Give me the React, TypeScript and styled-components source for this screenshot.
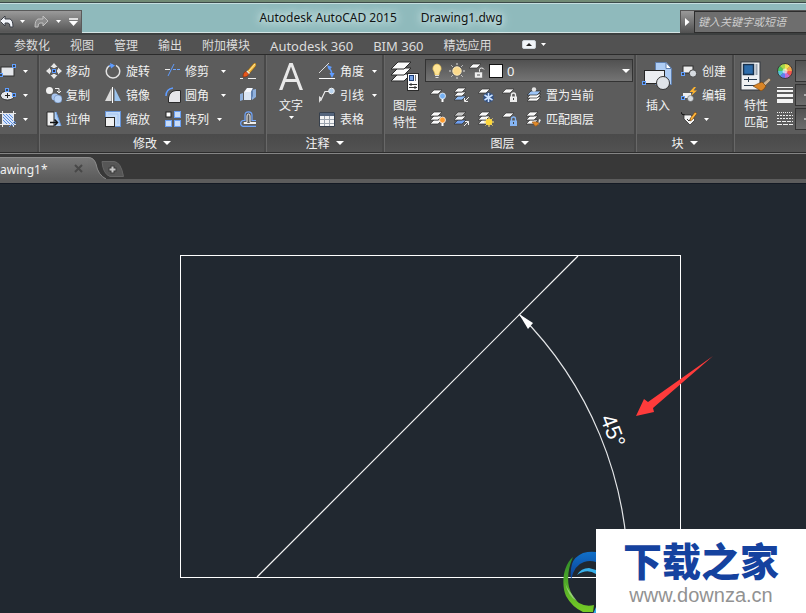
import React from "react";
import styled, { createGlobalStyle, css } from "styled-components";

const GlobalStyle = createGlobalStyle`
  *, *::before, *::after { box-sizing: border-box; }
  html, body { margin: 0; padding: 0; background: #212830; }
  body {
    font-family: "Noto Sans", "Noto Sans CJK SC", sans-serif;
    font-size: 12px;
    line-height: 16px;
    color: #f2f2f2;
  }
  button, input, select { font: inherit; color: inherit; }
`;

const Window = styled.div`
  display: flex;
  flex-direction: column;
  min-height: 100vh;
  overflow: hidden;
`;

const bareButton = css`
  display: flex;
  align-items: center;
  margin: 0;
  padding: 0;
  border: 0;
  background: none;
  white-space: nowrap;
  cursor: pointer;
`;

/* ---------- title bar ---------- */

const TitleBar = styled.header`
  display: flex;
  align-items: stretch;
  height: 35px;
  border-top: 2px solid #708a74;
  border-bottom: 2px solid #3c3f3f;
  background: #8fbabc;
  box-shadow: inset 0 1px 0 #3c4a49, inset 0 2px 0 #c4dedf, inset 0 -1px 0 #d4e4e4;
`;

const QuickAccess = styled.div`
  display: flex;
  align-items: center;
  width: 82px;
  margin-top: 8px;
  border: 1px solid #5a5a5a;
  border-left: 0;
  background: linear-gradient(#9a9a9a, #555555);
`;

const QuickButton = styled.button<{ $width: number }>`
  ${bareButton}
  justify-content: center;
  width: ${(p) => p.$width}px;
  height: 100%;
`;

const Title = styled.h1`
  display: flex;
  flex: 1;
  justify-content: center;
  gap: 24px;
  margin: 0;
  padding-top: 7px;
  color: #101414;
  font-size: 12px;
  font-weight: 400;
  line-height: 18px;
  white-space: nowrap;
  text-shadow: 0 0 6px #d8ebeb, 0 0 10px #d8ebeb, 0 0 14px #c8e0e0;
`;

const Search = styled.form`
  display: flex;
  width: 126px;
  margin: 8px 0 0;
  border-top: 1px solid #555555;
  border-left: 1px solid #555555;
  background: #6b6b6b;
`;

const SearchToggle = styled.button`
  ${bareButton}
  justify-content: center;
  width: 13px;
  background: linear-gradient(#9a9a9a, #505050);
`;

const SearchInput = styled.input`
  flex: 1;
  min-width: 0;
  padding: 0 0 0 3px;
  border: 1px solid #2d2d2d;
  border-right: 0;
  background: #6e6e6e;
  font-size: 11px;
  font-style: italic;
  &::placeholder { color: #cdcdcd; opacity: 1; }
`;

/* ---------- ribbon tabs ---------- */

const MenuBar = styled.nav`
  display: flex;
  align-items: center;
  gap: 20px;
  height: 20px;
  padding-left: 14px;
  border-bottom: 1px solid #2b2b2b;
  background: #525252;
`;

const MenuItem = styled.button<{ $latin: boolean }>`
  ${bareButton}
  height: 19px;
  padding-top: 2px;
  color: #dcdcdc;
  font-size: ${(p) => (p.$latin ? 13 : 12)}px;
`;

const RibbonToggle = styled.button`
  ${bareButton}
  gap: 5px;
  margin-left: 10px;
`;

/* ---------- ribbon ---------- */

const Ribbon = styled.div`
  display: flex;
  height: 98px;
  border-bottom: 1px solid #2c2c2c;
  background: #5c5c5c;
  overflow: hidden;
`;

const Panel = styled.section<{ $width?: number }>`
  display: flex;
  flex-direction: column;
  flex: ${(p) => (p.$width ? `0 0 ${p.$width}px` : "1 0 72px")};
  min-width: 0;
  border-right: 2px solid #484848;
  border-left: 1px solid #686868;
  overflow: hidden;
  &:first-child { border-left: 0; }
  &:last-child { border-right: 0; }
`;

const PanelBody = styled.div<{ $pad: number }>`
  display: flex;
  flex: 1;
  padding: 4px 0 0 ${(p) => p.$pad}px;
`;

const PanelFooter = styled.button`
  ${bareButton}
  justify-content: center;
  gap: 6px;
  width: 100%;
  height: 18px;
  background: linear-gradient(#4a4a4a, #525252);
`;

const Column = styled.div<{ $width?: number }>`
  display: flex;
  flex-direction: column;
  flex: ${(p) => (p.$width ? `0 0 ${p.$width}px` : "1")};
`;

const Tool = styled.button<{ $gap?: number }>`
  ${bareButton}
  gap: ${(p) => p.$gap ?? 5}px;
  height: 24px;
`;

const Label = styled.span`
  padding-top: 2px;
`;

const CaretSlot = styled.span<{ $space: number }>`
  display: flex;
  margin-left: ${(p) => p.$space}px;
`;

const BigTool = styled.button<{ $width: number }>`
  ${bareButton}
  flex: 0 0 ${(p) => p.$width}px;
  flex-direction: column;
  align-self: flex-start;
  padding-top: 2px;
  line-height: 17px;
`;

const BigLabel = styled.span`
  margin-top: 6px;
  white-space: pre-line;
`;

const BigCaret = styled.span`
  display: flex;
  margin-top: 2px;
`;

const LayerColumn = styled(Column)`
  margin-left: 4px;
`;

const LayerRow = styled.div`
  display: flex;
  align-items: center;
  gap: 8px;
  height: 24px;
  padding-left: 5px;
`;

const BlockColumn = styled(Column)`
  margin-left: 6px;
`;

const PropertyColumn = styled(Column)`
  margin-left: 4px;
`;

const ListGroup = styled(Column)`
  padding-left: 10px;
`;

const LayerCombo = styled.label`
  display: flex;
  align-items: center;
  gap: 4px;
  height: 23px;
  margin: 0 1px 1px 0;
  padding: 0 2px 0 3px;
  border: 1px solid #333333;
  background: linear-gradient(#515151, #747474);
`;

const LayerSelect = styled.select`
  appearance: none;
  flex: 1;
  min-width: 0;
  height: 20px;
  margin: 0;
  padding: 0;
  border: 0;
  background: transparent;
  font-size: 13px;
`;

const Swatch = styled.span`
  width: 14px;
  height: 14px;
  border: 1px solid #111111;
  background: #ffffff;
`;

const ValueBox = styled.button`
  ${bareButton}
  flex: 1;
  align-self: center;
  height: 22px;
  min-width: 12px;
  padding-left: 8px;
  border: 1px solid #333333;
  background: linear-gradient(#515151, #6c6c6c);
`;

const PropertyRow = styled.div`
  display: flex;
  align-items: center;
  gap: 2px;
  height: 24px;
`;

/* ---------- file tabs ---------- */

const FileTabs = styled.div`
  display: flex;
  align-items: flex-end;
  height: 30px;
  border-top: 1px solid #858585;
  border-bottom: 4px solid #5c5c5c;
  background: #383838;
`;

const FileTab = styled.div`
  display: flex;
  align-items: center;
  justify-content: space-between;
  width: 88px;
  height: 22px;
  padding-right: 5px;
  border-top: 1px solid #8c8c8c;
  background: linear-gradient(#777777, #5c5c5c);
`;

const IconButton = styled.button`
  ${bareButton}
`;

const AddTab = styled.button`
  ${bareButton}
  height: 22px;
`;

/* ---------- drawing area ---------- */

const Canvas = styled.main`
  position: relative;
  flex: 1;
  min-height: 430px;
  border-top: 1px solid #141a24;
  background: #212830;
  overflow: hidden;
`;

const Drawing = styled.svg`
  display: block;
`;

const Watermark = styled.aside`
  position: absolute;
  right: 0;
  bottom: 0;
  display: flex;
  align-items: flex-end;
`;

const WatermarkCard = styled.div`
  display: flex;
  flex-direction: column;
  align-items: center;
  width: 210px;
  height: 85px;
  padding-top: 9px;
  background: #ffffff;
`;

const WatermarkName = styled.strong`
  color: #15429f;
  font-family: "Noto Sans CJK SC", sans-serif;
  font-size: 39px;
  font-weight: 900;
  line-height: 42px;
`;

const WatermarkLink = styled.a`
  margin-top: 4px;
  color: #929292;
  font-family: "Liberation Sans", sans-serif;
  font-size: 20px;
  line-height: 22px;
  text-decoration: none;
`;

/* ---------- icons ---------- */

const Caret = ({ w = 5 }: { w?: number }) => (
  <svg width={w} height={Math.ceil(w / 2)} viewBox="0 0 10 6" preserveAspectRatio="none">
    <path d="M0 0H10L5 6Z" fill="#fff" />
  </svg>
);

const Svg = ({ w = 16, h = 16, children }: { w?: number; h?: number; children: React.ReactNode }) => (
  <svg width={w} height={h} viewBox={`0 0 ${w} ${h}`} fill="none" aria-hidden="true">
    {children}
  </svg>
);

const Grip = ({ x, y }: { x: number; y: number }) => (
  <rect x={x + 0.5} y={y + 0.5} width="3" height="3" fill="#384454" stroke="#62a0ff" />
);

const Sheet = ({ x, y, fill = "#fafafa" }: { x: number; y: number; fill?: string }) => (
  <path d={`M${x + 4} ${y}h8l-4 4h-8z`} fill={fill} stroke="#303030" strokeWidth=".7" />
);

const Stack = ({ bottom = "#fafafa", top = "#fafafa" }: { bottom?: string; top?: string }) => (
  <>
    <Sheet x={0} y={9} fill={bottom} />
    <Sheet x={0} y={5} />
    <Sheet x={0} y={1} fill={top} />
  </>
);

const Undo = () => (
  <Svg w={13} h={14}>
    <path d="M-1 6L4 1V4H9Q12 5 12 12H9Q9 8 7 8H4V11Z" fill="#f2f5fa" stroke="#3c4048" />
  </Svg>
);
const Redo = () => (
  <Svg w={15} h={14}>
    <path d="M14 6L9 1V4H4Q1 5 1 12H4Q4 8 6 8H9V11Z" fill="#8c8c8c" stroke="#c0c0c0" />
  </Svg>
);
const RectIcon = () => (
  <Svg>
    <rect x="1" y="4" width="13" height="9" fill="#e4e6ea" stroke="#2e2e2e" />
    <Grip x={12} y={1} />
    <Grip x={-1} y={10} />
  </Svg>
);
const EllipseIcon = () => (
  <Svg>
    <ellipse cx="7.500" cy="8.500" rx="7" ry="4.500" fill="#e4e6ea" stroke="#2e2e2e" />
    <path d="M5 8.500h5M7.500 6v5" stroke="#222" />
    <Grip x={12} y={6} />
    <Grip x={5} y={1} />
  </Svg>
);
const HatchIcon = () => (
  <Svg>
    <path d="M0 2.500h16M0 13.500h16M2.500 0v16M13.500 0v16" stroke="#e8e8e8" />
    <path d="M3 3h10v10H3z" fill="#d8e5fa" />
    <path d="M3 6l7 7M3 3l10 10M6 3l7 7M3 9l4 4M9 3l4 4M9 16l6-6M12 15l4-4" stroke="#5b8ee0" />
  </Svg>
);
const MoveIcon = () => (
  <Svg>
    <path d="M8 0l3.500 4h-2v2h-3V4h-2zM8 16l3.500-4h-2v-2h-3v2h-2zM0 8l4-3.500v2h2v3H4v2zM16 8l-4-3.500v2h-2v3h2v2z" fill="#e6e6e6" />
    <rect x="5" y="5" width="6" height="6" fill="#5c5c5c" />
    <rect x="6.500" y="6.500" width="3" height="3" fill="#334" stroke="#5b9bff" />
  </Svg>
);
const RotateIcon = () => (
  <Svg>
    <path d="M5 2.300A6.700 6.700 0 1 0 11 2.300" stroke="#e2e2e2" strokeWidth="1.500" />
    <path d="M5 0l5 2.500-4 3z" fill="#5f9cff" />
    <path d="M4 3l4-1" stroke="#5f9cff" strokeWidth="1.500" />
  </Svg>
);
const CopyIcon = () => (
  <Svg>
    <circle cx="3.500" cy="3.500" r="3.500" fill="#f2f2f2" />
    <circle cx="9" cy="10" r="3.500" fill="#a8c4ee" />
    <circle cx="12" cy="12" r="4" fill="#b8d2f5" stroke="#5c7fb0" strokeWidth=".5" />
    <path d="M9 1.500h4v4M11 4l2 2 2-2" stroke="#eee" />
  </Svg>
);
const MirrorIcon = () => (
  <Svg>
    <path d="M6.500 1v13H0z" fill="#dadada" />
    <path d="M9.500 1v13H16z" fill="#9cc4ee" />
    <path d="M7.500 0v16" stroke="#fff" />
  </Svg>
);
const StretchIcon = () => (
  <Svg>
    <path d="M7 1h3l5 14H7z" fill="#a9cbf4" />
    <path d="M1 1h7v14H1z" fill="#f0f0f0" stroke="#2a2a2a" />
    <path d="M10 1l5 14" stroke="#6ba0ea" />
    <path d="M4 11.500h7M8.500 8.500l3 3-3 3" stroke="#111" strokeWidth="1.500" />
  </Svg>
);
const ScaleIcon = () => (
  <Svg>
    <rect x=".5" y=".5" width="15" height="15" fill="#c2daf8" stroke="#6694d8" />
    <path d="M3 3h10v10" stroke="#a4c4f0" />
    <rect x=".5" y="6.500" width="9" height="9" fill="#f0f0f0" stroke="#2a2a2a" />
  </Svg>
);
const TrimIcon = () => (
  <Svg>
    <path d="M0 6.500h5" stroke="#eee" />
    <path d="M3 13L9 1" stroke="#5f9cff" />
    <path d="M8 6.500h8" stroke="#6fa6ff" strokeDasharray="3 1" />
  </Svg>
);
const FilletIcon = () => (
  <Svg>
    <path d="M3.500 15.500V11Q4.500 4 11 3.500H15.500V15.500z" fill="#e6e6ea" stroke="#2a2a2a" />
    <path d="M1 9Q1 2 8 1" stroke="#5f9cff" strokeWidth="1.500" />
  </Svg>
);
const ArrayIcon = () => (
  <Svg>
    <rect x="1" y="1" width="5" height="5" fill="#fff" stroke="#222" />
    {[[9, 0], [0, 9], [9, 9]].map(([x, y]) => (
      <rect key={`${x}-${y}`} x={x + 0.5} y={y + 0.5} width="6" height="6" fill="#c8dcf8" stroke="#6aa0f4" />
    ))}
  </Svg>
);
const BrushIcon = () => (
  <Svg>
    <path d="M14 0L7 8l2.500 2.500L16 3V0z" fill="#f2b83e" stroke="#6b4a18" strokeWidth=".6" />
    <path d="M15 1l-6 7" stroke="#ffe9a0" />
    <path d="M7.500 7.500l2.500 2.500-2 2-2.500-2.500z" fill="#f4ead8" />
    <path d="M6 8.500Q3 9 3 14Q8.500 14 8.500 11z" fill="#e8571c" stroke="#7a2a08" strokeWidth=".6" />
    <path d="M0 15.500h3M8 15.500h8" stroke="#eee" />
  </Svg>
);
const ExplodeIcon = () => (
  <Svg>
    <path d="M4 5h7v8H4z" fill="#dbe6f4" />
    <path d="M4 5l3-4h6l-2 4z" fill="#f6f9ff" />
    <path d="M12 3l4-1v8l-4 3zM0 7l3-1v7l-3 1z" fill="#8fb0dc" />
    <path d="M11 5l2-4v8l-2 4z" fill="#5f80b0" />
  </Svg>
);
const OffsetIcon = () => (
  <Svg>
    <path d="M16 15.300H3Q.7 15 .7 12.500T3 9.500h2V4Q5 .8 8.500 .8T12 4v5.500h4" stroke="#6fa6ff" strokeWidth="1.200" />
    <path d="M16 12.500H4Q3 12 4 11.500h3V5Q7 3 8.500 3T10 5v6.500h6" stroke="#f0f0f0" />
  </Svg>
);
const AngleIcon = () => (
  <Svg>
    <path d="M0 15.500h16" stroke="#fff" />
    <path d="M0 10L10 0" stroke="#ddd" />
    <path d="M9 4Q13 7 13 13" stroke="#5f9cff" strokeWidth="1.500" />
    <path d="M8 2l5 2-3 3zM10.500 10h5L13 15z" fill="#5f9cff" />
  </Svg>
);
const LeaderIcon = () => (
  <Svg>
    <path d="M1.500 14L6 4.500h4" stroke="#eee" strokeWidth="1.200" />
    <path d="M0 16V9l3 2z" fill="#ddd" />
    <circle cx="12.500" cy="4" r="2.800" fill="#b9d4ef" stroke="#f4f4f4" />
  </Svg>
);
const TableIcon = () => (
  <Svg>
    <path d="M.5 1.500h15v14H.5z" fill="#f4f4f4" stroke="#37404c" />
    <path d="M1 2h14v3H1z" fill="#55657c" />
    <path d="M1 8.500h14M1 12.500h14M5.500 5v10M10.500 5v10" stroke="#9ba3ad" />
  </Svg>
);
const TextIcon = () => (
  <Svg w={28} h={30}>
    <path d="M2 29L12.300 2h3.400L26 29h-3.400l-3-8H8.400l-3 8zM9.400 18h9.200L14 5.500z" fill="#e8e8e8" />
  </Svg>
);
const LayerPropsIcon = () => (
  <Svg w={30} h={30}>
    {[13, 7, 1].map((y) => (
      <path key={y} d={`M8 ${y}h13l-7 7H1z`} fill="#fafafa" stroke="#2a2a2a" />
    ))}
    <rect x="17.500" y="12.500" width="11" height="17" fill="#fafafa" stroke="#2a2a2a" />
    <rect x="19.500" y="14.500" width="4" height="5" fill="#7ba7ea" stroke="#1e3c74" />
    <path d="M25.500 14v6" stroke="#777" />
    <path d="M19 23.500h8M19 26.500h8M21 22v3M25 25v3" stroke="#333" />
  </Svg>
);
const BulbIcon = () => (
  <Svg>
    <path d="M8 1a4.500 4.500 0 0 1 3 7.500Q10 10 10 12H6q0-2-1-3.500A4.500 4.500 0 0 1 8 1z" fill="#ffe596" stroke="#e8c35a" strokeWidth=".7" />
    <path d="M6 12.500h4M6.500 14.500h3" stroke="#ddd" />
  </Svg>
);
const Rays = ({ cx, cy, r, color }: { cx: number; cy: number; r: number; color: string }) => (
  <path
    d={[0, 45, 90, 135, 180, 225, 270, 315]
      .map((a) => {
        const c = Math.cos((a * Math.PI) / 180);
        const s = Math.sin((a * Math.PI) / 180);
        return `M${cx + c * (r - 2)} ${cy + s * (r - 2)}L${cx + c * r} ${cy + s * r}`;
      })
      .join("")}
    stroke={color}
  />
);
const SunIcon = () => (
  <Svg>
    <Rays cx={8} cy={8} r={8} color="#ddd" />
    <circle cx="8" cy="8" r="4.200" fill="#fbd98a" stroke="#ffedbd" />
  </Svg>
);
const UnlockSheetIcon = () => (
  <Svg>
    <Sheet x={0} y={1} />
    <path d="M10.500 9V6.500Q10.500 5 12.500 5T15 6.500" stroke="#eee" />
    <rect x="5.500" y="9" width="8" height="6" fill="#eee" stroke="#555" strokeWidth=".5" />
    <path d="M8 12h3" stroke="#555" />
  </Svg>
);
const BulbBadge = ({ fill }: { fill: string }) => (
  <>
    <circle cx="12.500" cy="9" r="3" fill={fill} stroke="#fff" strokeWidth=".7" />
    <path d="M12.500 12v3" stroke="#fff" strokeWidth="2" />
  </>
);
const LayerOff = () => (
  <Svg><Sheet x={0} y={3} /><BulbBadge fill="#76b2f4" /></Svg>
);
const LayerOn = () => (
  <Svg><Stack /><BulbBadge fill="#ff9d2e" /></Svg>
);
const LayerIsolate = () => (
  <Svg><Stack bottom="#8fbcf6" /><path d="M15 10l-4 4M10.500 11v3.500H14" stroke="#eee" /></Svg>
);
const LayerUnisolate = () => (
  <Svg><Stack top="#c8c8c8" bottom="#6f9ff0" /><path d="M10 15l4.500-4.500M11 10.500h3.500V14" stroke="#eee" /></Svg>
);
const LayerFreeze = () => (
  <Svg>
    <Sheet x={0} y={2} />
    <path d="M10.500 5.500v10M6 8l9 5M6 13l9-5" stroke="#2c4f88" strokeWidth="4" />
    <path d="M10.500 6v9M6.500 8l8 5M6.500 13l8-5" stroke="#cfe4ff" strokeWidth="1.500" />
  </Svg>
);
const LayerThaw = () => (
  <Svg>
    <Stack />
    <Rays cx={11} cy={11} r={5} color="#ffe57a" />
    <circle cx="11" cy="11" r="3.300" fill="#ffd83a" />
  </Svg>
);
const LockBadge = ({ fill }: { fill: string }) => (
  <>
    <path d="M9.500 10V8Q9.500 6 11.500 6T13.500 8v2" stroke={fill} strokeWidth="1.300" />
    <rect x="8" y="9.500" width="7" height="5.500" fill={fill} />
    <path d="M11.500 11v2" stroke="#444" />
  </>
);
const LayerLock = () => (
  <Svg><Sheet x={0} y={2} /><LockBadge fill="#ededed" /></Svg>
);
const LayerUnlock = () => (
  <Svg><Sheet x={0} y={2} /><LockBadge fill="#86b6f4" /></Svg>
);
const MakeCurrentIcon = () => (
  <Svg>
    {[10, 7, 4].map((y) => (
      <path key={y} d={`M5 ${y}h10l-4 4H1z`} fill={y === 4 ? "#9cc4f6" : "#fafafa"} stroke="#2d2d2d" strokeWidth=".7" />
    ))}
    <circle cx="8" cy="2.500" r="2.200" fill="#e6e6e6" />
  </Svg>
);
const MatchLayerIcon = () => (
  <Svg>
    <Stack />
    <path d="M13 8l2 1-3 5z" fill="#eee" />
    <path d="M6 11q4-1 7 1-2 4-4 3z" fill="#e08a2a" stroke="#8a4c10" strokeWidth=".5" />
  </Svg>
);
const InsertIcon = () => (
  <Svg w={32} h={30}>
    <path d="M13.500 1.500H24l5.500 6V23.500H13.500z" fill="#aecdf5" stroke="#5f7fae" />
    <path d="M24 1.500v6h5.500z" fill="#fff" stroke="#5f7fae" />
    <rect x="2.500" y="9.500" width="20" height="13" fill="#eceef2" stroke="#262626" />
    <circle cx="21" cy="22" r="6.500" fill="#dfe3e8" stroke="#333" />
    <Grip x={0} y={20} />
  </Svg>
);
const BlockCreateIcon = () => (
  <Svg>
    <rect x="2" y="3" width="10" height="7" fill="#eee" stroke="#2e2e2e" />
    <circle cx="12" cy="10.500" r="3.700" fill="#d6dbe0" stroke="#444" />
    <Grip x={0} y={9} />
  </Svg>
);
const BlockEditIcon = () => (
  <Svg>
    <rect x="2" y="6" width="8" height="5" fill="#eee" />
    <circle cx="9.500" cy="11.500" r="3" fill="#d6dbe0" stroke="#555" strokeWidth=".5" />
    <path d="M13 0L8.500 5H12L10 9l6-5.500h-3.500L15 0z" fill="#ffb42e" />
    <Grip x={0} y={9} />
  </Svg>
);
const AttributeIcon = () => (
  <Svg>
    <path d="M0 1Q0 4 4 4" stroke="#111" />
    <path d="M3 4h7l4 5-5 5-6-6z" fill="#f4f4f4" stroke="#222" strokeWidth=".7" />
    <path d="M6 8l2 2 3-4" stroke="#333" />
    <path d="M14 1l2 1.500L11 9l-2 1 .5-3z" fill="#ffb63c" stroke="#6a3a0c" strokeWidth=".6" />
  </Svg>
);
const MatchPropsIcon = () => (
  <Svg w={32} h={30}>
    <rect x="1" y="1" width="19" height="28" fill="#eef0f3" stroke="#30363e" />
    <rect x="3.500" y="3.500" width="10" height="10" fill="#2d6cab" stroke="#18304c" strokeWidth="1.500" />
    <path d="M16.500 3v11" stroke="#9aa4b0" strokeWidth="2" />
    <path d="M4 18.500h13M4 24.500h13M8.500 16v5" stroke="#26384c" />
    <path d="M29 17l2 2-6 6-3-2z" fill="#c9b295" stroke="#554430" strokeWidth=".5" />
    <path d="M13 25q6-3 9-4l4 4q-2 4-5 5-3-2-8-5z" fill="#d98425" stroke="#6a3a0c" strokeWidth=".6" />
  </Svg>
);
const wheel = ["#f6a04a", "#f2564e", "#c76ad0", "#5f7df0", "#54c8d8", "#4cc860", "#a8d84a", "#f4e04e"];
const ColorWheel = () => (
  <Svg>
    {wheel.map((c, i) => {
      const a = ((i * 45 - 45) * Math.PI) / 180;
      const b = (i * 45 * Math.PI) / 180;
      return (
        <path
          key={c}
          d={`M8 8L${8 + 7.5 * Math.cos(a)} ${8 + 7.5 * Math.sin(a)}A7.500 7.500 0 0 1 ${8 + 7.5 * Math.cos(b)} ${8 + 7.5 * Math.sin(b)}Z`}
          fill={c}
        />
      );
    })}
    <circle cx="8" cy="8" r="2.500" fill="#fff" opacity=".6" />
    <circle cx="8" cy="8" r="7.500" stroke="#3c3c3c" />
  </Svg>
);
const WeightIcon = () => (
  <Svg>
    <path d="M0 .5h16" stroke="#f4f4f4" />
    <path d="M0 4h16" stroke="#f4f4f4" strokeWidth="2" />
    <path d="M0 8.500h16" stroke="#f4f4f4" strokeWidth="3" />
    <path d="M0 14h16" stroke="#f4f4f4" strokeWidth="4" />
  </Svg>
);
const LineTypeIcon = () => (
  <Svg>
    <path d="M0 1.500h16" stroke="#eee" strokeDasharray="1 1" />
    <path d="M0 4.500h16M0 7.500h16" stroke="#eee" strokeDasharray="2 1" />
    <path d="M0 10.500h16" stroke="#eee" strokeDasharray="4 1" />
    <path d="M0 13.500h16" stroke="#eee" strokeDasharray="5 1" />
  </Svg>
);
const Dash = () => (
  <Svg w={6} h={2}><path d="M0 1h6" stroke="#fff" /></Svg>
);

/* ---------- data ---------- */

const menus = [
  { label: "参数化" },
  { label: "视图" },
  { label: "管理" },
  { label: "输出" },
  { label: "附加模块" },
  { label: "Autodesk 360", latin: true },
  { label: "BIM 360", latin: true },
  { label: "精选应用" },
];

type ToolItem = { icon: React.ReactNode; label: string; caret?: number };

const modifyColumns: { width: number; gap: number; items: ToolItem[] }[] = [
  { width: 59, gap: 4, items: [
    { icon: <MoveIcon />, label: "移动" },
    { icon: <CopyIcon />, label: "复制" },
    { icon: <StretchIcon />, label: "拉伸" },
  ] },
  { width: 60, gap: 5, items: [
    { icon: <RotateIcon />, label: "旋转" },
    { icon: <MirrorIcon />, label: "镜像" },
    { icon: <ScaleIcon />, label: "缩放" },
  ] },
  { width: 75, gap: 4, items: [
    { icon: <TrimIcon />, label: "修剪", caret: 8 },
    { icon: <FilletIcon />, label: "圆角", caret: 8 },
    { icon: <ArrayIcon />, label: "阵列", caret: 4 },
  ] },
];

const annotateTools: ToolItem[] = [
  { icon: <AngleIcon />, label: "角度", caret: 3 },
  { icon: <LeaderIcon />, label: "引线", caret: 3 },
  { icon: <TableIcon />, label: "表格" },
];

const layerRows: { icons: [string, React.ReactNode][]; tool: ToolItem }[] = [
  {
    icons: [["关闭", <LayerOff />], ["隔离", <LayerIsolate />], ["冻结", <LayerFreeze />], ["锁定", <LayerLock />]],
    tool: { icon: <MakeCurrentIcon />, label: "置为当前" },
  },
  {
    icons: [["打开", <LayerOn />], ["取消隔离", <LayerUnisolate />], ["解冻", <LayerThaw />], ["解锁", <LayerUnlock />]],
    tool: { icon: <MatchLayerIcon />, label: "匹配图层" },
  },
];

const ToolButton = ({ item, gap }: { item: ToolItem; gap?: number }) => (
  <Tool type="button" $gap={gap}>
    {item.icon}
    <Label>{item.label}</Label>
    {item.caret !== undefined && <CaretSlot $space={item.caret}><Caret /></CaretSlot>}
  </Tool>
);

const Footer = ({ label }: { label: string }) => (
  <PanelFooter type="button"><Label>{label}</Label><Caret w={8} /></PanelFooter>
);

export default function App() {
  return (
    <>
      <GlobalStyle />
      <Window>
        <TitleBar>
          <QuickAccess>
            <QuickButton $width={14} aria-label="放弃"><Undo /></QuickButton>
            <QuickButton $width={17} aria-label="放弃列表"><Caret /></QuickButton>
            <QuickButton $width={20} aria-label="重做"><Redo /></QuickButton>
            <QuickButton $width={14} aria-label="重做列表"><Caret /></QuickButton>
            <QuickButton $width={16} aria-label="自定义">
              <Svg w={9} h={8}><path d="M0 1h9" stroke="#fff" strokeWidth="1.500" /><path d="M0 3h9l-4.500 5z" fill="#fff" /></Svg>
            </QuickButton>
          </QuickAccess>
          <Title><span>Autodesk AutoCAD 2015</span><span>Drawing1.dwg</span></Title>
          <Search onSubmit={(e) => e.preventDefault()}>
            <SearchToggle type="button" aria-label="展开">
              <Svg w={5} h={8}><path d="M0 0l4.500 4L0 8z" fill="#fff" /></Svg>
            </SearchToggle>
            <SearchInput aria-label="搜索" placeholder="键入关键字或短语" />
          </Search>
        </TitleBar>

        <MenuBar>
          {menus.map((m) => <MenuItem key={m.label} type="button" $latin={!!m.latin}>{m.label}</MenuItem>)}
          <RibbonToggle type="button" aria-label="最小化功能区">
            <Svg w={14} h={9}>
              <rect x=".5" y=".5" width="13" height="8" rx="1.500" fill="#f0f4f8" stroke="#cdd4da" />
              <path d="M4 6l3-3 3 3z" fill="#222" />
            </Svg>
            <Caret />
          </RibbonToggle>
        </MenuBar>

        <Ribbon>
          <Panel $width={39}>
            <PanelBody $pad={0}>
              <Column>
                <Tool type="button" $gap={7} aria-label="矩形"><RectIcon /><Caret /></Tool>
                <Tool type="button" $gap={7} aria-label="椭圆"><EllipseIcon /><Caret /></Tool>
                <Tool type="button" $gap={7} aria-label="图案填充"><HatchIcon /><Caret /></Tool>
              </Column>
            </PanelBody>
            <PanelFooter type="button" aria-label="绘图" />
          </Panel>

          <Panel $width={227}>
            <PanelBody $pad={6}>
              {modifyColumns.map((c) => (
                <Column key={c.width} $width={c.width}>
                  {c.items.map((i) => <ToolButton key={i.label} item={i} gap={c.gap} />)}
                </Column>
              ))}
              <Column>
                <Tool type="button" aria-label="删除"><BrushIcon /></Tool>
                <Tool type="button" aria-label="分解"><ExplodeIcon /></Tool>
                <Tool type="button" aria-label="偏移"><OffsetIcon /></Tool>
              </Column>
            </PanelBody>
            <Footer label="修改" />
          </Panel>

          <Panel $width={118}>
            <PanelBody $pad={6}>
              <BigTool type="button" $width={36}>
                <TextIcon />
                <BigLabel>文字</BigLabel>
                <BigCaret><Caret /></BigCaret>
              </BigTool>
              <ListGroup>
                {annotateTools.map((i) => <ToolButton key={i.label} item={i} />)}
              </ListGroup>
            </PanelBody>
            <Footer label="注释" />
          </Panel>

          <Panel $width={252}>
            <PanelBody $pad={4}>
              <BigTool type="button" $width={32}>
                <LayerPropsIcon />
                <BigLabel>{"图层\n特性"}</BigLabel>
              </BigTool>
              <LayerColumn>
                <LayerCombo>
                  <BulbIcon />
                  <SunIcon />
                  <UnlockSheetIcon />
                  <Swatch />
                  <LayerSelect aria-label="图层" defaultValue="0"><option>0</option></LayerSelect>
                  <Caret w={8} />
                </LayerCombo>
                {layerRows.map((r) => (
                  <LayerRow key={r.tool.label}>
                    {r.icons.map(([name, icon]) => <IconButton key={name} type="button" aria-label={name}>{icon}</IconButton>)}
                    <ToolButton item={r.tool} gap={4} />
                  </LayerRow>
                ))}
              </LayerColumn>
            </PanelBody>
            <Footer label="图层" />
          </Panel>

          <Panel $width={98}>
            <PanelBody $pad={4}>
              <BigTool type="button" $width={34}>
                <InsertIcon />
                <BigLabel>插入</BigLabel>
              </BigTool>
              <BlockColumn>
                <ToolButton item={{ icon: <BlockCreateIcon />, label: "创建" }} />
                <ToolButton item={{ icon: <BlockEditIcon />, label: "编辑" }} />
                <Tool type="button" aria-label="编辑属性" $gap={7}><AttributeIcon /><Caret /></Tool>
              </BlockColumn>
            </PanelBody>
            <Footer label="块" />
          </Panel>

          <Panel>
            <PanelBody $pad={4}>
              <BigTool type="button" $width={34}>
                <MatchPropsIcon />
                <BigLabel>{"特性\n匹配"}</BigLabel>
              </BigTool>
              <PropertyColumn>
                <PropertyRow><ColorWheel /><ValueBox type="button" aria-label="对象颜色" /></PropertyRow>
                <PropertyRow><WeightIcon /><ValueBox type="button" aria-label="线宽"><Dash /></ValueBox></PropertyRow>
                <PropertyRow><LineTypeIcon /><ValueBox type="button" aria-label="线型"><Dash /></ValueBox></PropertyRow>
              </PropertyColumn>
            </PanelBody>
            <PanelFooter type="button" aria-label="特性" />
          </Panel>
        </Ribbon>

        <FileTabs>
          <FileTab>
            <Label>awing1*</Label>
            <IconButton type="button" aria-label="关闭">
              <Svg w={9} h={9}><path d="M1 1l7 7M8 1l-7 7" stroke="#484848" strokeWidth="2" /></Svg>
            </IconButton>
          </FileTab>
          <AddTab type="button" aria-label="新图形">
            <Svg w={38} h={22}>
              <defs>
                <linearGradient id="tabFill" x1="0" y1="0" x2="0" y2="1">
                  <stop offset="0" stopColor="#777" />
                  <stop offset="1" stopColor="#5c5c5c" />
                </linearGradient>
              </defs>
              <path d="M0 0Q6 0 8 7Q10 18 18 22H0z" fill="url(#tabFill)" />
              <path d="M0 .5Q6 .5 8 7Q10 18 18 22" stroke="#8c8c8c" />
              <path d="M14 4.500h12Q33 5 35.500 19.500H22Q15 17 14 4.500z" fill="#565656" stroke="#666" />
              <path d="M20.500 12.500h8M24.500 8.500v8" stroke="#3a3a3a" strokeWidth="4" />
              <path d="M21.500 12.500h6M24.500 9.500v6" stroke="#c4c4c4" strokeWidth="2" />
            </Svg>
          </AddTab>
        </FileTabs>

        <Canvas>
          <Drawing width="806" height="430" viewBox="0 0 806 430" fill="none">
            <rect x="180.500" y="71.500" width="500" height="322" stroke="#fff" />
            <path d="M578 72L257 393" stroke="#f4f4f4" strokeWidth="1.200" />
            <path d="M519 130A371 371 0 0 1 628 393" stroke="#e4e6e8" strokeWidth="1.200" />
            <path d="M519 130L533 139 528 145Z" fill="#fff" />
            <text transform="translate(600 234) rotate(69)" fill="#fff" fontFamily="Liberation Sans, sans-serif" fontSize="22">45°</text>
            <path d="M636 232L644 215 648 218 713 172 653 224 654 228Z" fill="#ff3b3b" />
          </Drawing>
          <Watermark>
            <Svg w={34} h={63}>
              <defs>
                <linearGradient id="leaf" x1="0" y1="0" x2="0" y2="1">
                  <stop offset="0" stopColor="#2f8c2a" />
                  <stop offset="1" stopColor="#76cc26" />
                </linearGradient>
                <linearGradient id="wave" x1="0" y1="0" x2="0" y2="1">
                  <stop offset="0" stopColor="#1170c8" />
                  <stop offset="1" stopColor="#0b3f94" />
                </linearGradient>
              </defs>
              <path d="M11 6C1 14-1 34 4 45Q10 56 21 61H31L32 54Q24 56 17 52Q10 47 7 36Q4 22 11 6z" fill="url(#leaf)" />
              <path d="M3 31Q6 46 15 50L9 42Q5 38 3 31z" fill="#b9e6a4" opacity=".6" />
              <path d="M34 1Q28 0 21 2Q12 6 10 13Q8 20 9 29Q12 14 22 11Q28 9 34 11z" fill="url(#wave)" />
              <path d="M15 24Q19 17 27 17L34 19V23Q25 17 15 24z" fill="#38b0ea" />
              <path d="M31 63L34 56V63z" fill="#38b0ea" />
            </Svg>
            <WatermarkCard>
              <WatermarkName>下载之家</WatermarkName>
              <WatermarkLink href="#">www.downza.cn</WatermarkLink>
            </WatermarkCard>
          </Watermark>
        </Canvas>
      </Window>
    </>
  );
}
